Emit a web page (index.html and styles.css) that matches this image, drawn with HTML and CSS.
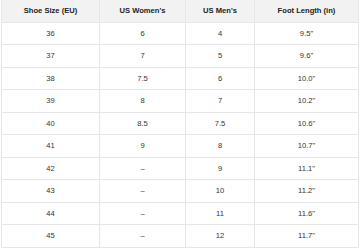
FILE: index.html
```html
<!DOCTYPE html>
<html lang="en">
<head>
<meta charset="UTF-8">
<meta name="viewport" content="width=device-width, initial-scale=1.0">
<title>Shoe Size Chart</title>
<link rel="stylesheet" href="styles.css">
</head>
<body>

<div class="container">
  <table class="size-table">
    <colgroup>
      <col class="col-eu">
      <col class="col-women">
      <col class="col-men">
      <col class="col-foot">
    </colgroup>
    <thead>
      <tr>
        <th>Shoe Size (EU)</th>
        <th>US Women's</th>
        <th>US Men's</th>
        <th>Foot Length (in)</th>
      </tr>
    </thead>
    <tbody>
      <tr><td>36</td><td>6</td><td>4</td><td>9.5"</td></tr>
      <tr><td>37</td><td>7</td><td>5</td><td>9.6"</td></tr>
      <tr><td>38</td><td>7.5</td><td>6</td><td>10.0"</td></tr>
      <tr><td>39</td><td>8</td><td>7</td><td>10.2"</td></tr>
      <tr><td>40</td><td>8.5</td><td>7.5</td><td>10.6"</td></tr>
      <tr><td>41</td><td>9</td><td>8</td><td>10.7"</td></tr>
      <tr><td>42</td><td>&ndash;</td><td>9</td><td>11.1"</td></tr>
      <tr><td>43</td><td>&ndash;</td><td>10</td><td>11.2"</td></tr>
      <tr><td>44</td><td>&ndash;</td><td>11</td><td>11.6"</td></tr>
      <tr><td>45</td><td>&ndash;</td><td>12</td><td>11.7"</td></tr>
    </tbody>
  </table>
</div>

</body>
</html>
```

FILE: styles.css
```css
body {
  font-family: Arial, "Liberation Sans", sans-serif;
  background-color: #fff;
  margin: 0;
  padding: 0;
}
.container {
  padding: 0 1px;
}
.size-table {
  width: 100%;
  margin-top: -1px;
  border-collapse: collapse;
  table-layout: fixed;
  font-size: 7.6px;
  color: #333;
}
.col-eu { width: 98px; }
.col-women { width: 86px; }
.col-men { width: 69px; }
.col-foot { width: 104px; }
.size-table th,
.size-table td {
  height: 21.5px;
  padding: 0;
  text-align: center;
  border: 1px solid #e6e6e6;
}
.size-table th {
  background-color: #f2f2f2;
  color: #222;
  font-weight: bold;
}
```
